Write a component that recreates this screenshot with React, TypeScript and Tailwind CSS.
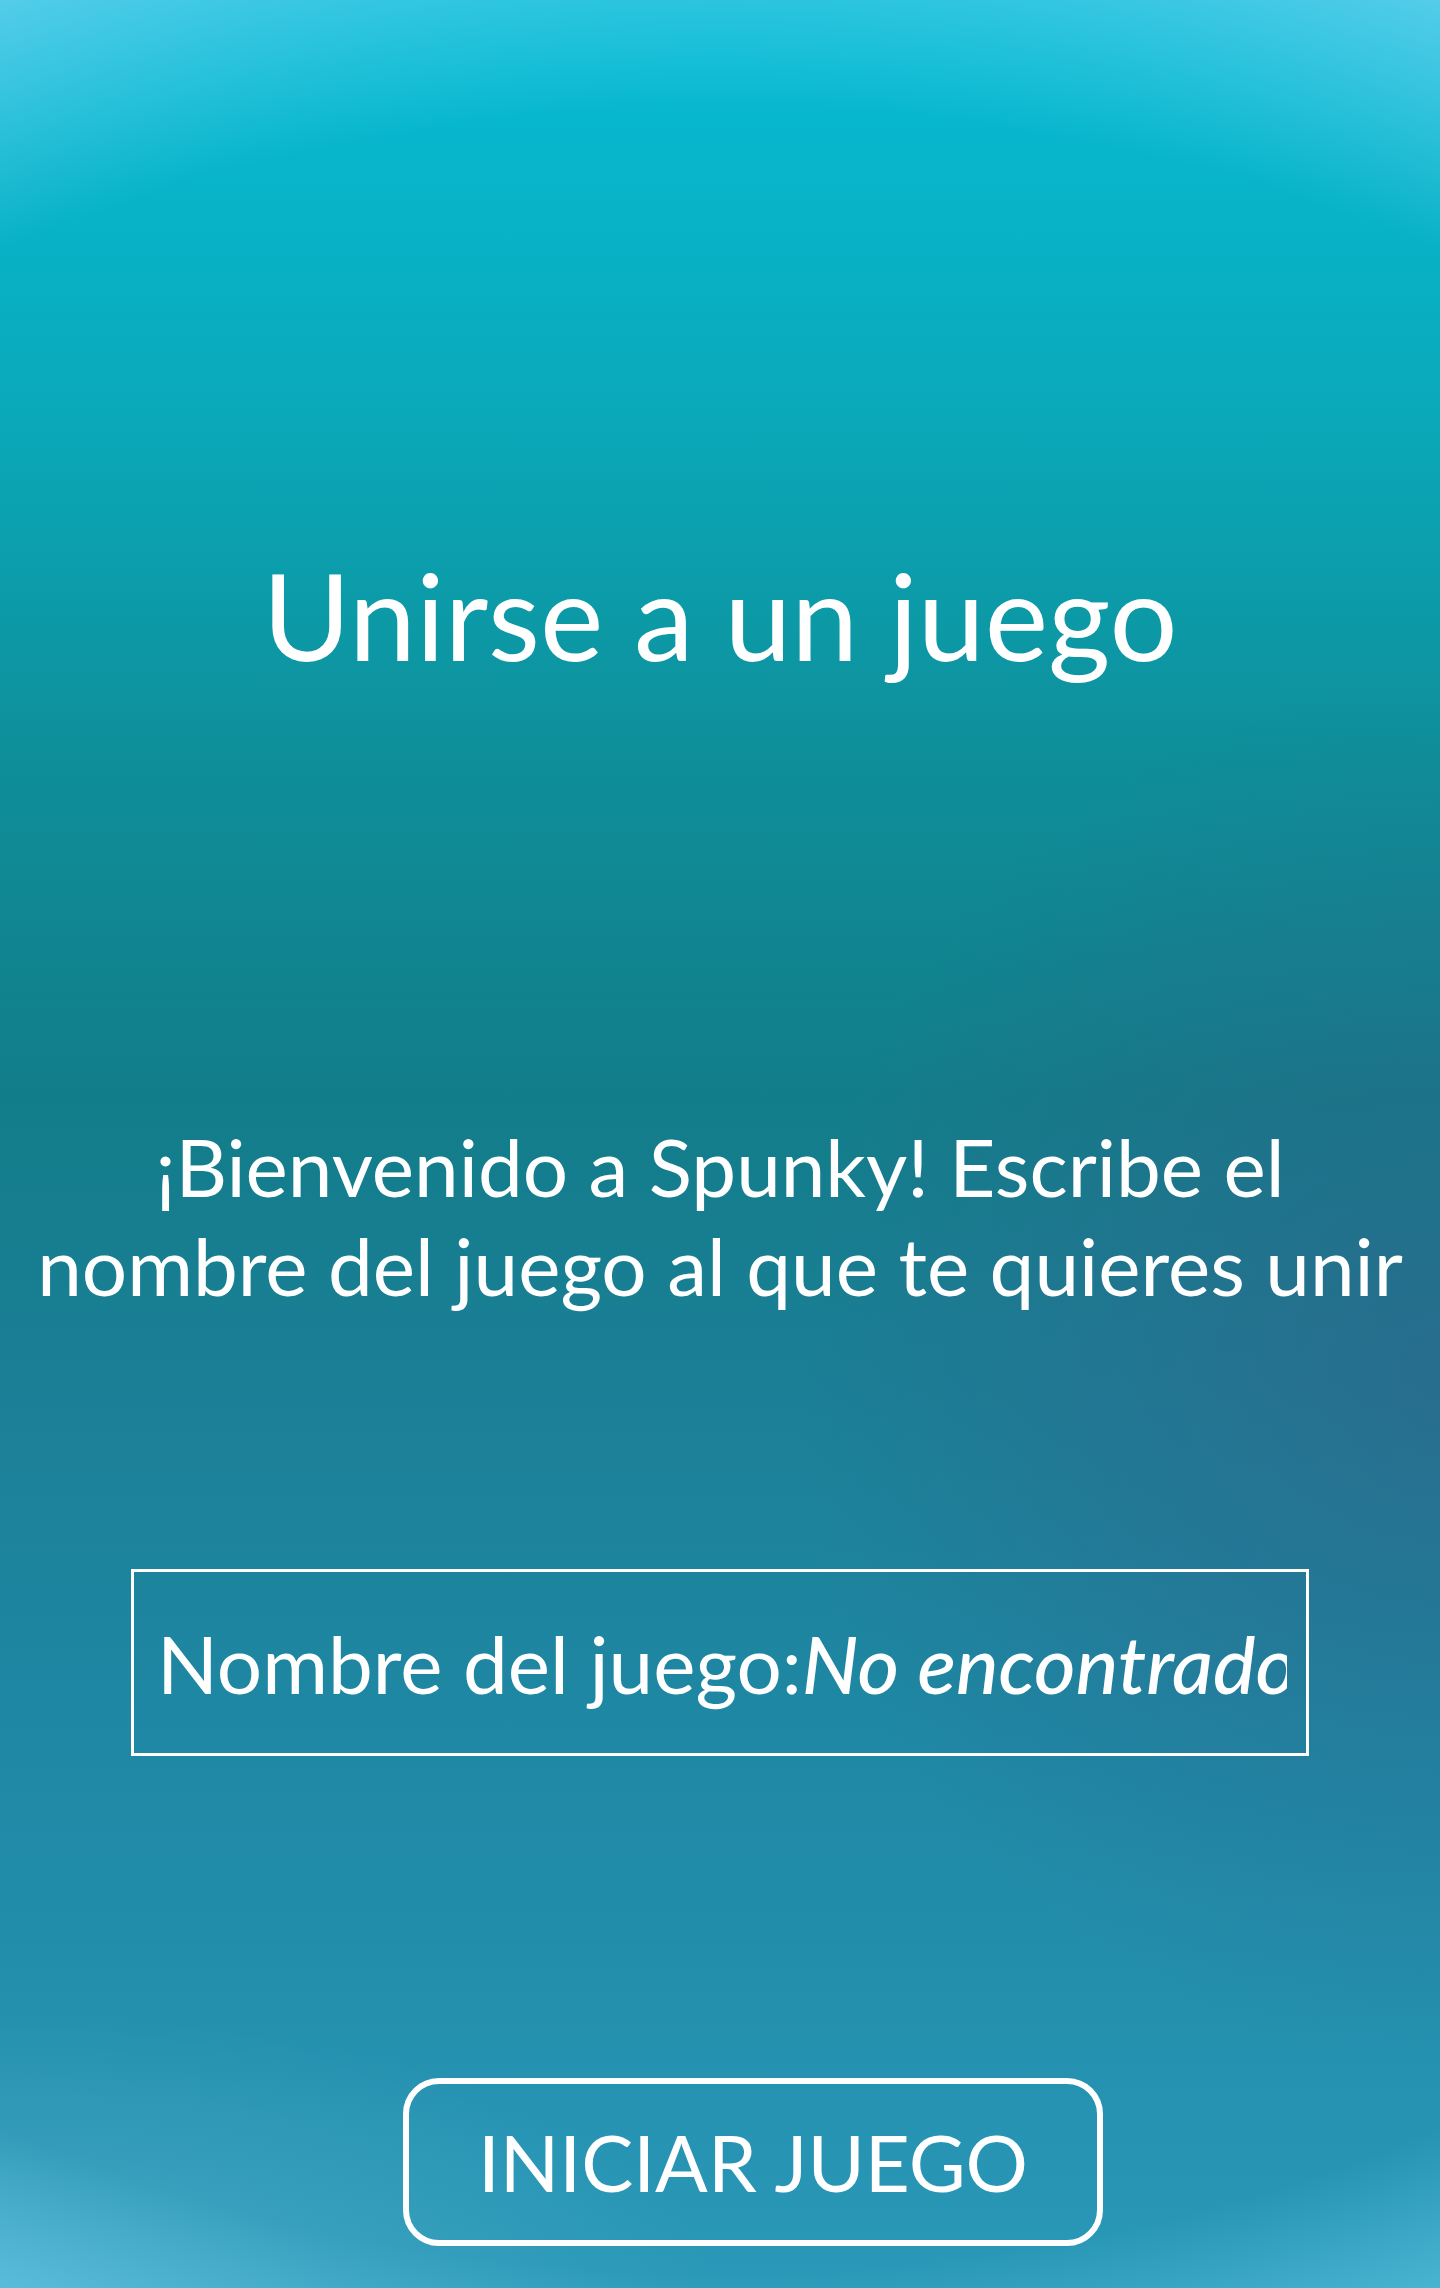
export default function App() {
  return (
    <div
      className="flex min-h-[2288px] w-full flex-col items-center bg-[radial-gradient(ellipse_110%_52%_at_50%_52%,transparent_91%,rgba(110,210,240,0.75)_110%),radial-gradient(ellipse_45%_30%_at_100%_60%,rgba(50,95,135,0.55),transparent_100%),radial-gradient(ellipse_50%_12%_at_0%_100%,rgba(120,200,225,0.35),transparent_100%),linear-gradient(to_bottom,#06bdd6_0%,#0aa9ba_18%,#0e8f9a_33%,#127d8a_48%,#1b7f96_60%,#1f89a6_78%,#2a98b8_100%)] text-white"
      style={{ fontFamily: "Lato, 'Open Sans', sans-serif" }}
    >
      <h1 className="mt-[543px] text-[120px] leading-[1.2] font-normal">
        Unirse a un juego
      </h1>

      <p className="mt-[430px] w-full px-4 text-center text-[80px] leading-[99px]">
        ¡Bienvenido a Spunky! Escribe el nombre del juego al que te quieres
        unir
      </p>

      <div className="mt-[254px] flex h-[187px] w-[1178px] items-center border-[3px] border-white pr-[19px] pl-[23px]">
        <div className="overflow-hidden py-2 text-[80px] leading-[1.25] whitespace-nowrap">
          Nombre del juego:
          <span className="font-medium italic">No encontrado</span>
        </div>
      </div>

      <div className="mt-[322px] flex w-full justify-center pl-[66px]">
        <button className="flex h-[168px] w-[700px] items-center justify-center rounded-[36px] border-[6px] border-white text-[78px] leading-none">
          INICIAR JUEGO
        </button>
      </div>
    </div>
  );
}
